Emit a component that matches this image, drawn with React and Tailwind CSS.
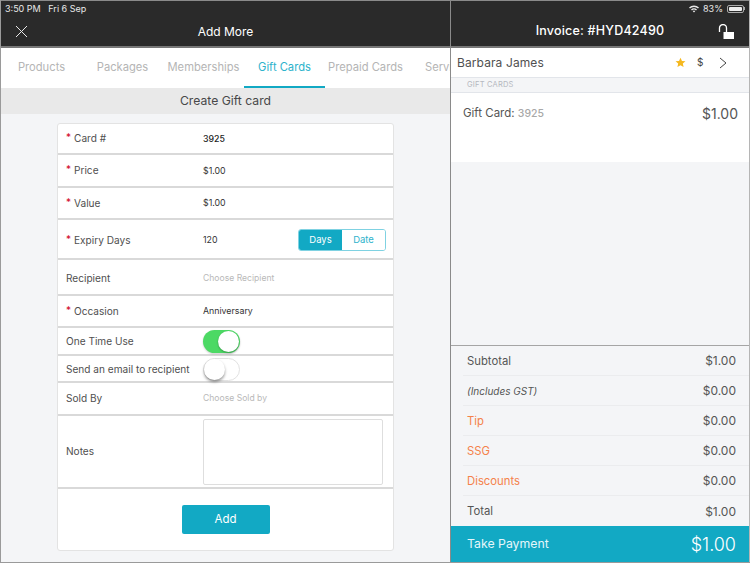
const Req = () => <span className="text-[#d0021b] mr-[3px] text-[10px] relative -top-[1px]">*</span>;

function Row({ h, label, req, children, pt = "" }) {
  return (
    <div className={`${h} ${pt} flex items-center border-b-2 border-[#d9d9d9] shrink-0`}>
      <div className="w-[145px] pl-[8px] pt-[1px] shrink-0 text-[10.1px] text-[#4f4f4f] whitespace-nowrap">
        {req && <Req />}
        <span>{label}</span>
      </div>
      <div className="flex-1 flex items-center text-[8.8px] text-[#333] pr-[7px]">{children}</div>
    </div>
  );
}

function Toggle({ on }) {
  return on ? (
    <div className="w-[37px] h-[23px] rounded-full bg-[#4cd964] flex items-center justify-end pr-[1px] shadow-[0_1px_2px_rgba(0,0,0,0.2)]">
      <div className="w-[21px] h-[21px] rounded-full bg-white shadow-[0_1px_2px_rgba(0,0,0,0.3)]" />
    </div>
  ) : (
    <div className="w-[37px] h-[23px] rounded-full bg-white border border-[#e2e2e2] flex items-center">
      <div className="w-[21px] h-[21px] rounded-full bg-white shadow-[0_2px_3px_rgba(0,0,0,0.4)]" />
    </div>
  );
}

function Sum({ label, value, labelClass = "text-[#555] text-[11.3px]", last }) {
  return (
    <div className={`h-[30px] pt-[1px] flex items-center justify-between ml-[12px] pl-[4px] pr-[13px] ${last ? "" : "border-b border-[#ebecee]"}`}>
      <span className={labelClass}>{label}</span>
      <span className="text-[12px] text-[#555]">{value}</span>
    </div>
  );
}

export default function App() {
  const tabs = [
    ["Products", "w-[81px]"],
    ["Packages", "w-[81px]"],
    ["Memberships", "w-[81px]"],
    ["Gift Cards", "w-[81px]"],
    ["Prepaid Cards", "w-[81px]"],
  ];
  return (
    <div className="w-[750px] h-[563px] overflow-hidden flex flex-col bg-[#f4f5f7] border-b border-[#9a9a9a] font-['Inter','Liberation_Sans',sans-serif]">
      <div className="flex-1 min-h-0 flex">
        {/* Left panel */}
        <div className="w-[450px] shrink-0 flex flex-col border-l border-[#9a9a9a]">
          <div className="h-[48px] bg-[#2a2a2a] border-t border-[#8a8a8a] border-b-2 border-b-[#777] flex flex-col shrink-0">
            <div className="h-[15px] pl-[4px] pt-[1px] text-[9px] leading-[13px] text-[#e8e8e8] whitespace-pre">3:50 PM   Fri 6 Sep</div>
            <div className="flex-1 flex items-center relative justify-center">
              <svg className="absolute left-[14px] top-[9px]" width="13" height="13" viewBox="0 0 13 13" fill="none" stroke="#e8e8e8" strokeWidth="1">
                <path d="M1 1 L12 12 M12 1 L1 12" />
              </svg>
              <span className="text-[12px] text-white pt-[1px]">Add More</span>
            </div>
          </div>
          <div className="h-[40px] bg-white flex shrink-0 overflow-hidden">
            {tabs.map(([t, w]) => (
              <div key={t} className={`${w} shrink-0 h-full flex items-center justify-center text-[11.2px] whitespace-nowrap ${t === "Gift Cards" ? "text-[#2eb3cc] border-b-[2px] border-[#12a9c4]" : "text-[#b5b5b5] border-b-[2px] border-transparent"}`}>{t}</div>
            ))}
            <div className="ml-[19px] w-[25px] overflow-hidden h-full flex items-center text-[11.2px] text-[#b5b5b5] whitespace-nowrap pb-[2px]">Services</div>
          </div>
          <div className="h-[26px] bg-[#e9e9e9] flex items-center justify-center text-[12.2px] text-[#484848] shrink-0">Create Gift card</div>
          <div className="flex-1 min-h-0 pt-[9px] pl-[56px]">
            <div className="w-[337px] h-[428px] bg-white border border-[#e3e3e3] rounded-[3px] flex flex-col">
              <Row h="h-[31px]" label="Card #" req><span className="font-medium text-[#222] pt-[1px]">3925</span></Row>
              <Row h="h-[33px]" label="Price" req>$1.00</Row>
              <Row h="h-[32px]" label="Value" req>$1.00</Row>
              <Row h="h-[40px]" pt="pt-[2px]" label="Expiry Days" req>
                <span className="flex-1">120</span>
                <div className="flex w-[88px] h-[22px] rounded-[3px] border border-[#7fd2e2] overflow-hidden text-[9.5px]">
                  <div className="w-[43px] bg-[#12a9c4] text-white flex items-center justify-center">Days</div>
                  <div className="flex-1 bg-white text-[#2eb3cc] flex items-center justify-center">Date</div>
                </div>
              </Row>
              <Row h="h-[36px]" pt="pt-[2px]" label="Recipient"><span className="text-[#b9b9b9] text-[8.6px]">Choose Recipient</span></Row>
              <Row h="h-[32px]" label="Occasion" req>Anniversary</Row>
              <Row h="h-[28px]" label="One Time Use"><Toggle on /></Row>
              <Row h="h-[27px]" pt="pt-[1px]" label="Send an email to recipient"><Toggle /></Row>
              <Row h="h-[33px]" label="Sold By"><span className="text-[#b9b9b9] text-[8.6px]">Choose Sold by</span></Row>
              <Row h="h-[73px]" label="Notes">
                <div className="w-[180px] h-[66px] border border-[#dedede] rounded-[2px] bg-white" />
              </Row>
              <div className="flex-1 flex items-center justify-center">
                <div className="w-[88px] h-[29px] rounded-[2px] bg-[#12a9c4] text-white text-[11.5px] flex items-center justify-center">Add</div>
              </div>
            </div>
          </div>
        </div>
        {/* Right panel */}
        <div className="flex-1 min-w-0 flex flex-col border-l border-r border-l-[#8a8a8a] border-r-[#b5b5b5]">
          <div className="h-[48px] bg-[#2a2a2a] border-t border-[#8a8a8a] border-b-2 border-b-[#777] flex flex-col shrink-0 text-white">
            <div className="h-[15px] flex items-center justify-end gap-[3px] pr-[4px] text-[9px] text-[#e8e8e8]">
              <svg width="10" height="8" viewBox="0 0 10 8" fill="#e8e8e8"><path d="M0 2.6 A7 7 0 0 1 10 2.6 L9 3.6 A5.6 5.6 0 0 0 1 3.6Z M2 4.5 A4.2 4.2 0 0 1 8 4.5 L7 5.5 A2.8 2.8 0 0 0 3 5.5Z M3.8 6.2 A1.7 1.7 0 0 1 6.2 6.2 L5 7.6Z" /></svg>
              <span className="mx-[1px]">83%</span>
              <div className="flex items-center">
                <div className="w-[17px] h-[8px] rounded-[2px] border border-[#aaa] p-[1px]"><div className="h-full w-[13px] bg-[#eee] rounded-[1px]" /></div>
                <div className="w-[1px] h-[3px] bg-[#aaa]" />
              </div>
            </div>
            <div className="flex-1 flex items-center justify-center relative">
              <span className="text-[12.5px] font-medium tracking-[0.2px] pt-[1px]">Invoice: #HYD42490</span>
              <svg className="absolute right-[15px] top-[8px]" width="16" height="16" viewBox="0 0 16 16" fill="none">
                <path d="M1.5 8 V4 A3.5 3.5 0 0 1 8.5 4 V8" stroke="#fff" strokeWidth="1.3" />
                <rect x="5.5" y="8" width="10.5" height="7" fill="#fff" />
              </svg>
            </div>
          </div>
          <div className="h-[29px] bg-white flex items-center pl-[6px] shrink-0">
            <span className="text-[12px] text-[#505050] tracking-[0.1px] flex-1">Barbara James</span>
            <svg width="11" height="11" viewBox="0 0 24 24" fill="#f5b81f"><path d="M12 1.5l3.2 7 7.6.8-5.7 5.1 1.6 7.5L12 18.1l-6.7 3.8 1.6-7.5L1.2 9.3l7.6-.8z" /></svg>
            <span className="text-[10px] text-[#444] ml-[11px] w-[6px]">$</span>
            <svg className="ml-[16px] mr-[22px]" width="8" height="12" viewBox="0 0 8 12" fill="none" stroke="#444" strokeWidth="1"><path d="M1 1 L7 6 L1 11" /></svg>
          </div>
          <div className="h-[16px] bg-[#f4f5f7] border-y border-[#e2e5ea] pl-[16px] text-[7.5px] leading-[14px] text-[#b4b8c0] tracking-[0.2px] shrink-0">GIFT CARDS</div>
          <div className="h-[69px] bg-white flex justify-between pl-[12px] pr-[11px] pt-[12px] shrink-0">
            <span className="text-[11.5px] leading-[16px] text-[#555]">Gift Card: <span className="text-[#a8a8a8] font-medium text-[10.5px]">3925</span></span>
            <span className="text-[14px] leading-[18px] text-[#555]">$1.00</span>
          </div>
          <div className="flex-1 min-h-0 border-b border-[#a5a5a5]" />
          <div className="h-[180px] shrink-0">
            <Sum label="Subtotal" value="$1.00" />
            <Sum label="(Includes GST)" value="$0.00" labelClass="text-[#555] italic text-[10px]" />
            <Sum label="Tip" value="$0.00" labelClass="text-[#f5824a] text-[11.3px]" />
            <Sum label="SSG" value="$0.00" labelClass="text-[#f5824a] text-[11.3px]" />
            <Sum label="Discounts" value="$0.00" labelClass="text-[#f5824a] text-[11.3px]" />
            <Sum label="Total" value="$1.00" last />
          </div>
          <div className="h-[36px] bg-[#12a9c4] flex items-center justify-between pl-[16px] pr-[13px] text-white shrink-0">
            <span className="text-[12.3px] text-[#e4f6fa] pt-[1px]">Take Payment</span>
            <span className="text-[18px] font-light">$1.00</span>
          </div>
        </div>
      </div>
    </div>
  );
}
